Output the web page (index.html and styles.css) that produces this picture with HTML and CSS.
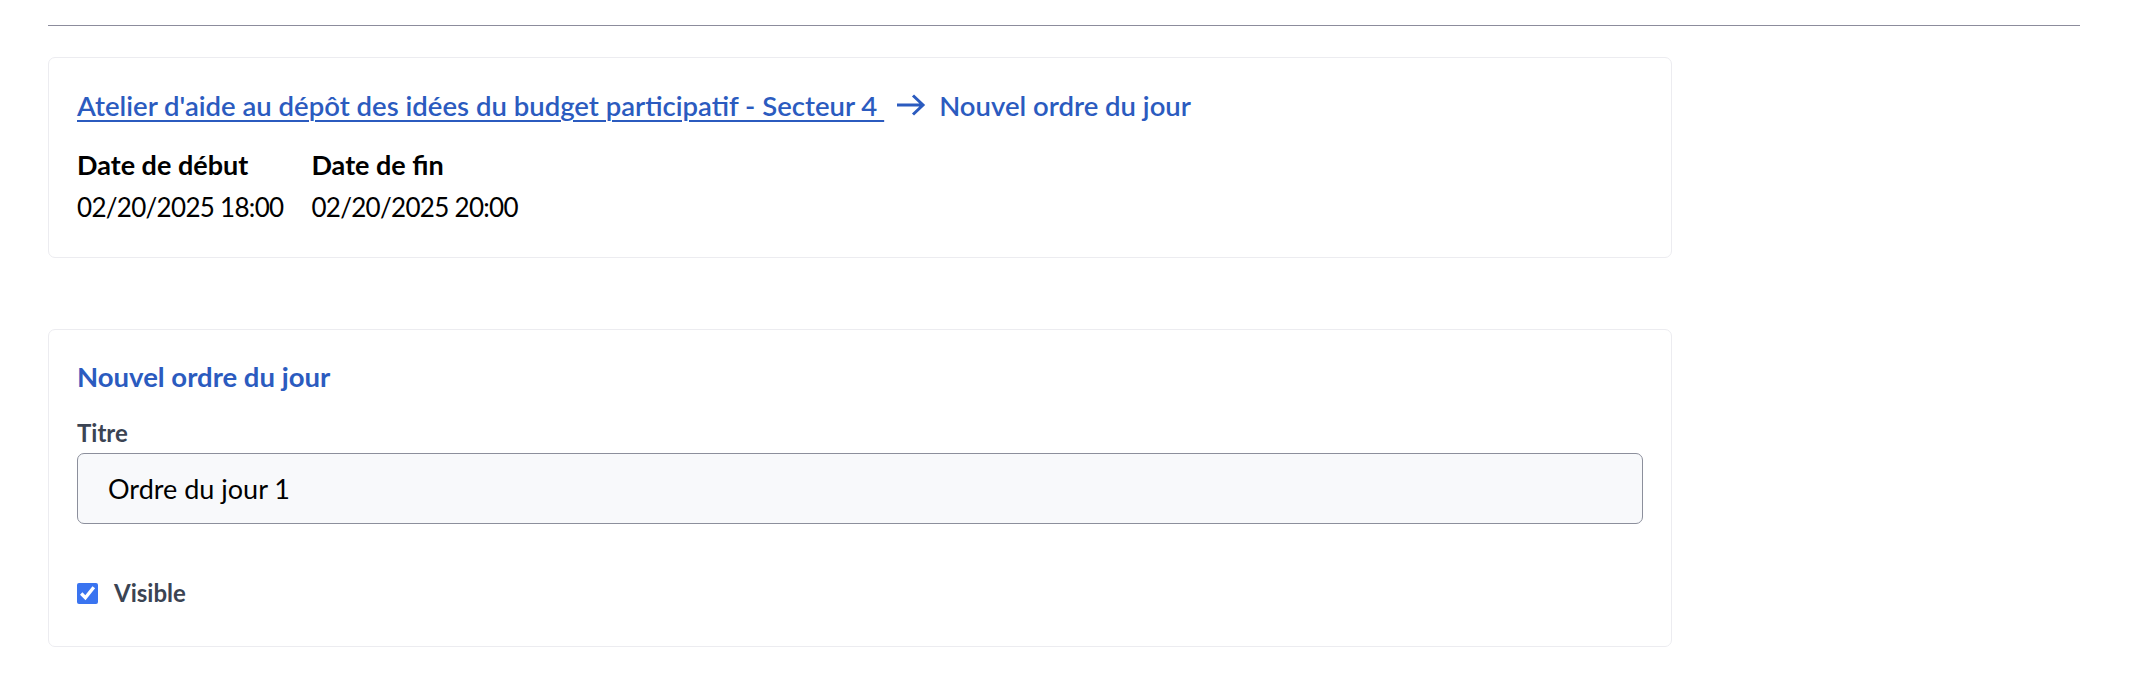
FILE: index.html
```html
<!DOCTYPE html>
<html lang="fr">
<head>
<meta charset="utf-8">
<title>Nouvel ordre du jour</title>
<link rel="stylesheet" href="styles.css">
</head>
<body>
<div class="page">
  <hr class="divider">
  <section class="card meeting">
    <div class="crumbs">
      <a class="crumb-link" href="#">Atelier d'aide au dépôt des idées du budget participatif - Secteur 4 </a>
      <svg class="arrow" width="32" height="26" viewBox="0 0 32 26" aria-hidden="true"><path d="M2 13H28M18 3.5L28 13L18 22.5" fill="none" stroke="#2b5bbf" stroke-width="3"/></svg>
      <span class="crumb-current">Nouvel ordre du jour</span>
    </div>
    <div class="dates">
      <div class="date-col">
        <div class="date-label">Date de début</div>
        <div class="date-value">02/20/2025 18:00</div>
      </div>
      <div class="date-col">
        <div class="date-label">Date de fin</div>
        <div class="date-value">02/20/2025 20:00</div>
      </div>
    </div>
  </section>
  <section class="card form-card">
    <h2 class="form-title">Nouvel ordre du jour</h2>
    <label class="field-label" for="titre">Titre</label>
    <input class="text-input" id="titre" type="text" value="Ordre du jour 1">
    <label class="check-row">
      <input class="check" type="checkbox" checked>
      <span class="check-label">Visible</span>
    </label>
  </section>
</div>
</body>
</html>
```
FILE: styles.css
```css
html, body {
  margin: 0;
  padding: 0;
  background: #ffffff;
}
body {
  font-family: Lato, "Noto Sans", sans-serif;
  color: #000;
}
.page {
  padding: 25px 52px 0 48px;
}
.divider {
  border: 0;
  border-top: 1.5px solid #8c8c9c;
  margin: 0 0 31px 0;
}
.card {
  width: 1624px;
  box-sizing: border-box;
  border: 1px solid #ececf0;
  border-radius: 7px;
  padding: 29px 28px;
  background: #fff;
}
.meeting {
  padding-bottom: 27px;
}
.crumbs {
  display: flex;
  align-items: center;
  height: 36px;
  font-size: 27.5px;
  font-weight: 600;
}
.crumb-link {
  color: #2b5bbf;
  text-decoration: underline;
  text-decoration-thickness: 2px;
  text-underline-offset: 4px;
  white-space: pre;
}
.arrow {
  margin: 0 12px 0 11px;
}
.crumb-current {
  color: #2b5bbf;
}
.dates {
  display: flex;
  gap: 28px;
  margin-top: 22px;
}
.date-label {
  font-size: 27px;
  font-weight: 700;
  line-height: 40px;
}
.date-value {
  font-size: 26px;
  letter-spacing: -0.7px;
  line-height: 45px;
}
.form-card {
  margin-top: 71px;
  padding-bottom: 38px;
}
.form-title {
  margin: 0;
  font-size: 27.5px;
  font-weight: 700;
  color: #2b5bbf;
  line-height: 36px;
}
.field-label {
  display: block;
  margin-top: 23px;
  font-size: 24px;
  font-weight: 700;
  color: #3b4453;
  line-height: 30px;
}
.text-input {
  display: block;
  box-sizing: border-box;
  margin-top: 5px;
  width: 100%;
  height: 71px;
  padding: 0 30px;
  border: 1px solid #8c8f9c;
  border-radius: 7px;
  background: #f8f9fb;
  font-family: Lato, "Noto Sans", sans-serif;
  font-size: 27px;
  color: #000;
}
.check-row {
  display: flex;
  align-items: center;
  gap: 16px;
  margin-top: 54px;
}
.check {
  margin: 0;
  width: 21px;
  height: 21px;
  accent-color: #3a74f0;
}
.check-label {
  font-size: 24px;
  font-weight: 700;
  color: #3b4453;
  line-height: 30px;
}
```
